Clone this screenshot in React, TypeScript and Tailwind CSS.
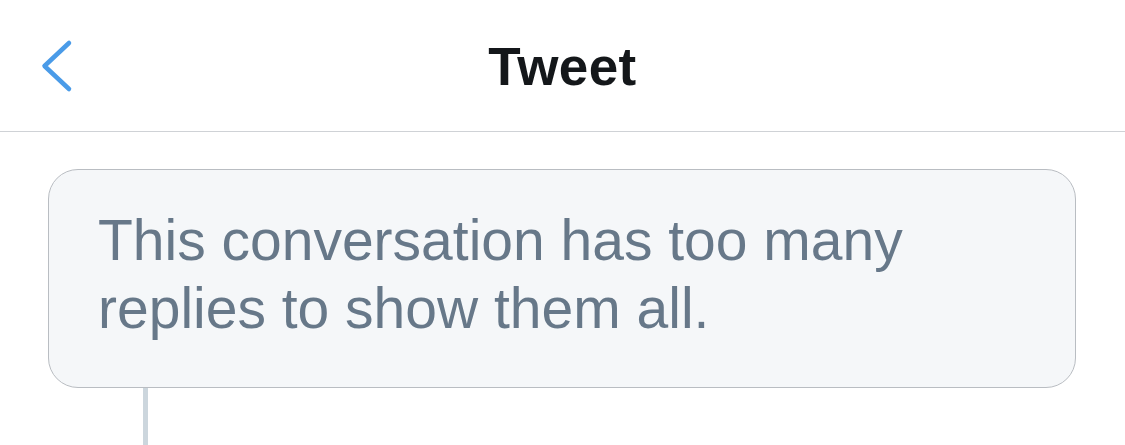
export default function App() {
  return (
    <div className="w-[1125px] h-[445px] bg-white overflow-hidden" style={{ fontFamily: '"Liberation Sans", Arial, sans-serif' }}>
      <div className="relative h-[132px] border-b border-[#cfd2d6] flex items-center justify-center">
        <svg className="absolute left-[38px] top-[37px]" width="36" height="58" viewBox="0 0 36 58" fill="none">
          <path d="M31 6 L6.5 29 L31 52" stroke="#4a9be8" strokeWidth="4.5" strokeLinecap="round" strokeLinejoin="round" />
        </svg>
        <div className="text-[53px] font-bold text-[#14171a] leading-none tracking-[0.4px] pt-[2px]">Tweet</div>
      </div>
      <div className="pl-[48px] pr-[49px] pt-[37px]">
        <div className="rounded-[30px] border border-[#b9bdc2] bg-[#f5f7f9] pl-[49px] pr-[20px] pt-[36px] pb-[45px]">
          <div className="text-[57px] leading-[68px] text-[#677889]">
            This conversation has too many<br />replies to show them all.
          </div>
        </div>
        <div className="ml-[95px] w-[5px] h-[60px] bg-[#ccd6dd]" />
      </div>
    </div>
  );
}
